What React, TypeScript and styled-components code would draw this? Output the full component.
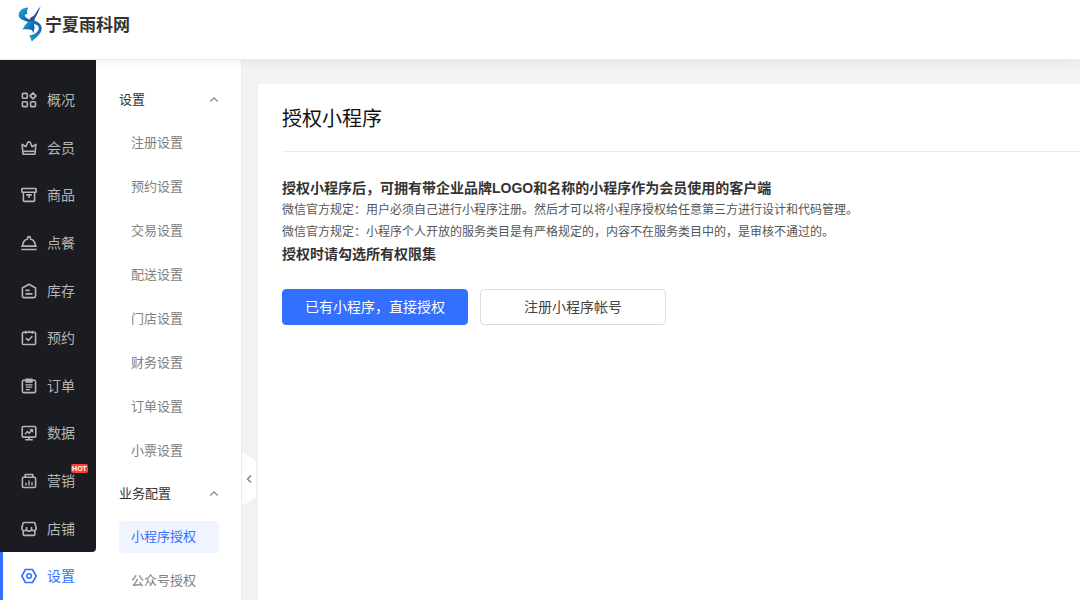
import React from 'react';
import styled, { createGlobalStyle, css } from 'styled-components';

const Global = createGlobalStyle`
  *, *::before, *::after { box-sizing: border-box; }
  body {
    margin: 0;
    background: #f2f2f5;
    color: #333;
    font-family: "Liberation Sans", "Noto Sans CJK SC", sans-serif;
    font-size: 14px;
  }
  button { font-family: inherit; }
  h1, h2, p, ul { margin: 0; padding: 0; }
  ul { list-style: none; }
  a { text-decoration: none; color: inherit; }
`;

const Page = styled.div`
  display: flex;
  flex-direction: column;
  min-height: 100vh;
`;

const Header = styled.header`
  display: flex;
  align-items: flex-start;
  height: 60px;
  padding: 4px 18px;
  background: #fff;
  border-bottom: 1px solid #ececee;
  box-shadow: 0 2px 10px rgba(0, 0, 0, 0.05);
  position: relative;
  z-index: 1;
`;

const Brand = styled.a`
  display: flex;
  align-items: center;
  gap: 2px;
  height: 38px;
  color: #333;
  font-family: "Liberation Serif", "Noto Sans CJK SC", serif;
  font-size: 17px;
  font-weight: 700;
`;

const Body = styled.div`
  display: flex;
  flex: 1;
`;

const MainNav = styled.nav`
  flex: none;
  width: 96px;
  background: #fff;
  display: flex;
`;

const NavList = styled.ul`
  flex: 1;
  display: flex;
  flex-direction: column;
`;

const NavItem = styled.li<{ $first?: boolean }>`
  flex: 1 1 0;
  min-height: 46px;
  max-height: 48px;
  display: flex;
  background: #1b1c21;
  ${(p) => p.$first && css`
    flex: none;
    min-height: 64px;
    padding-top: 16px;
  `}
  &:nth-last-child(2) { border-bottom-right-radius: 4px; }
  &:last-child { background: #fff; }
`;

const NavLink = styled.a<{ $active?: boolean }>`
  flex: 1;
  display: flex;
  align-items: center;
  gap: 10px;
  padding-left: ${(p) => (p.$active ? '18px' : '21px')};
  border-left: ${(p) => (p.$active ? '3px solid #3370ff' : 'none')};
  color: ${(p) => (p.$active ? '#3370ff' : '#b4b5b7')};
  font-size: 14px;
  line-height: 20px;
  svg { flex: none; }
`;

const NavLabel = styled.span`
  position: relative;
`;

const Hot = styled.span`
  position: absolute;
  left: 24px;
  top: -7px;
  width: 17px;
  height: 9px;
  border-radius: 2px;
  background: #f5432f;
  color: #fff;
  font-size: 7px;
  line-height: 9px;
  font-weight: 700;
  text-align: center;
`;

const SubNav = styled.nav`
  flex: none;
  width: 146px;
  padding: 16px 22px 0 23px;
  background: #fff;
  border-right: 1px solid #ececee;
`;

const GroupToggle = styled.button`
  display: flex;
  align-items: center;
  justify-content: space-between;
  width: 100%;
  height: 44px;
  padding: 0;
  border: 0;
  background: none;
  color: #333;
  font-size: 13px;
`;

const SubItem = styled.li`
  height: 44px;
  padding-top: 7px;
  &:last-child { height: 42px; }
`;

const SubLink = styled.a<{ $active?: boolean }>`
  display: block;
  height: 32px;
  padding-left: 12px;
  border-radius: 4px;
  background: ${(p) => (p.$active ? '#eff4ff' : 'transparent')};
  color: ${(p) => (p.$active ? '#3370ff' : '#808080')};
  font-size: 13px;
  line-height: 32px;
`;

const Content = styled.main`
  position: relative;
  flex: 1;
  min-width: 0;
  display: flex;
  padding: 24px 0 0 16px;
`;

const Collapse = styled.button`
  position: absolute;
  left: 0;
  top: 392px;
  width: 14px;
  height: 54px;
  padding: 0;
  border: 0;
  background: #fff;
  clip-path: polygon(0 0, 100% 17%, 100% 83%, 0 100%);
  display: flex;
  align-items: center;
  justify-content: center;
`;

const Card = styled.section`
  flex: 1;
  min-width: 0;
  padding: 0 0 24px 24px;
  background: #fff;
  border-top-left-radius: 4px;
`;

const Title = styled.h1`
  height: 68px;
  border-bottom: 1px solid #ebebed;
  color: #111;
  font-size: 20px;
  line-height: 70px;
  font-weight: 400;
`;

const Notice = styled.div`
  padding: 25px 24px 0 0;
`;

const Strong = styled.p`
  color: #333;
  font-size: 14px;
  line-height: 22px;
  font-weight: 700;
`;

const Text = styled.p`
  color: #555;
  font-size: 12px;
  line-height: 22px;
`;

const Actions = styled.div`
  display: flex;
  gap: 12px;
  padding-top: 24px;
`;

const Button = styled.button<{ $primary?: boolean }>`
  width: 186px;
  height: 36px;
  padding: 0 0 2px;
  border: 1px solid ${(p) => (p.$primary ? '#3370ff' : '#dcdcdc')};
  border-radius: 4px;
  background: ${(p) => (p.$primary ? '#3370ff' : '#fff')};
  color: ${(p) => (p.$primary ? '#fff' : '#444')};
  font-size: 14px;
`;

const Icon = ({ children }: { children: React.ReactNode }) => (
  <svg width="16" height="16" viewBox="0 0 16 16" fill="none" stroke="currentColor" strokeWidth="1.6" strokeLinejoin="round" aria-hidden="true">
    {children}
  </svg>
);

const icons = {
  overview: (
    <>
      <rect x="1.4" y="1.4" width="4.9" height="4.9" rx="0.8" />
      <path d="M12 .9 15 3.900 12 6.900 9 3.900Z" />
      <rect x="1.4" y="9.700" width="4.9" height="4.9" rx="0.8" />
      <rect x="9.600" y="9.700" width="4.9" height="4.9" rx="0.8" />
    </>
  ),
  member: (
    <>
      <path d="M1.1 4.4 4.900 6.700 6.700 2.500Q8 .9 9.300 2.500L11.100 6.700 14.900 4.400 13.900 14.200H2.100Z" />
      <path d="M2.2 11.3h11.6" />
    </>
  ),
  goods: (
    <>
      <rect x="0.9" y="1.500" width="14.2" height="3.8" rx="0.5" />
      <path d="M2.4 5.3v8.2q0 .9.9.9h9.4q.9 0 .9-.9V5.3M5.2 7.9h5.600M8 7.9v3.200" />
    </>
  ),
  dining: (
    <>
      <path d="M1.4 11.2C1.7 7.5 4 4.600 6.500 3.900V3.100A1.500 1.500 0 0 1 9.500 3.100v.8c2.500.7 4.800 3.600 5.100 7.300Z" />
      <path d="M.3 11.2h15.4M.3 14.5h15.4" />
    </>
  ),
  stock: (
    <>
      <path d="M1.4 5 8 1.3 14.6 5v8q0 1.6-1.6 1.6H3Q1.4 14.6 1.4 13Z" />
      <path d="M4.5 7.4h4.2M4.5 10.9h7" />
    </>
  ),
  booking: (
    <>
      <rect x="1.4" y="2.3" width="13.2" height="12.2" rx="0.9" />
      <path d="M4.7.8v3M11.3.8v3M8 .8v2M4.9 8l2.4 2.5 4-4.2" />
    </>
  ),
  order: (
    <>
      <rect x="1.4" y="2.2" width="13.2" height="12.4" rx="1.3" />
      <path d="M5 1.4h6v2.5H5Z" />
      <path strokeWidth="1.300" d="M4.5 6.800h7M4.900 9.200h6.200M4.900 11.600h4" />
    </>
  ),
  data: (
    <>
      <rect x="1.2" y="1.5" width="13.6" height="10.6" rx="1.2" />
      <path d="M8 12.1v2.5M4.2 14.8h7.6" />
      <path strokeWidth="1.400" d="M4 9.200 6.400 6.400l1.800 1.900 3-3.500M8.800 4.600h2.700v2.600" />
    </>
  ),
  marketing: (
    <>
      <rect x="1.4" y="4.3" width="13.2" height="10.2" rx="1.2" />
      <path d="M4.2 4.3V1.5h7.6v2.800" />
      <path strokeWidth="1.400" d="M5 9.700v2.800M8 7.500v5M11 9v3.500" />
    </>
  ),
  shop: (
    <>
      <path d="M3.3 1.500h9.4q1 0 1.300.9l1.100 4.400a2.300 2.300 0 0 1-4.600 1 2.500 2.500 0 0 1-5 0A2.300 2.300 0 0 1 .9 6.800L2 2.400q.3-.9 1.300-.9ZM5.500 5.900v1.900M10.500 5.900v1.900" />
      <path d="M2.200 9.200v4q0 1.200 1.200 1.200h9.200q1.200 0 1.200-1.200v-4" />
    </>
  ),
  settings: (
    <>
      <path d="M4.5 1.5h7L15.2 8l-3.7 6.5h-7L.8 8Z" />
      <circle cx="8" cy="8" r="2.200" />
    </>
  ),
};

const navItems: { id: keyof typeof icons; label: string; hot?: boolean }[] = [
  { id: 'overview', label: '概况' },
  { id: 'member', label: '会员' },
  { id: 'goods', label: '商品' },
  { id: 'dining', label: '点餐' },
  { id: 'stock', label: '库存' },
  { id: 'booking', label: '预约' },
  { id: 'order', label: '订单' },
  { id: 'data', label: '数据' },
  { id: 'marketing', label: '营销', hot: true },
  { id: 'shop', label: '店铺' },
  { id: 'settings', label: '设置' },
];

const groups = [
  {
    title: '设置',
    items: ['注册设置', '预约设置', '交易设置', '配送设置', '门店设置', '财务设置', '订单设置', '小票设置'],
  },
  { title: '业务配置', items: ['小程序授权', '公众号授权'] },
];

const Logo = () => (
  <svg width="25" height="38" viewBox="0 0 25 38" aria-hidden="true">
    <defs>
      <linearGradient id="ribbon" x1="0" y1="0" x2="1" y2="1">
        <stop offset="0" stopColor="#1cb4dc" />
        <stop offset="0.55" stopColor="#1272b4" />
        <stop offset="1" stopColor="#164a92" />
      </linearGradient>
      <linearGradient id="tail" x1="1" y1="0" x2="0" y2="1">
        <stop offset="0" stopColor="#1a55a0" />
        <stop offset="1" stopColor="#18a2cf" />
      </linearGradient>
    </defs>
    <path fill="url(#ribbon)" d="M10.500 3.500C5 3.300.500 7 .6 11.200.8 14.500 4.500 16 8.200 17.200L13 19 15.500 16.800C11.500 15.500 7 13.800 6.800 11.700 6.700 10.300 8 9.900 9.700 10.100 8.300 8 9 5.300 10.500 3.500Z" />
    <path fill="#2a4c96" d="M22.800 2.200C20.500 6.500 19.300 11 16.800 14.500L15.500 21 12 17.500 12.300 13.700 15.500 12C18 9.500 19.200 5.500 22.800 2.200Z" />
    <path fill="url(#ribbon)" d="M10.500 17.500 7.200 21 4.500 25.500C8.500 25 12 25 14.200 26.300L15.300 29.500 16.500 24 15.800 17.200Z" />
    <path fill="url(#tail)" d="M14.500 16C19.500 17.300 23.800 20 23.700 24.500 23.600 30.500 16.500 33.800 13.900 37.800L11.500 31.200C16.500 31 21.300 27.500 20.800 23.600 20.500 21.300 17.800 20.200 15 20Z" />
  </svg>
);

export default function App() {
  return (
    <Page>
      <Global />
      <Header>
        <Brand href="#home">
          <Logo />
          <span>宁夏雨科网</span>
        </Brand>
      </Header>
      <Body>
        <MainNav aria-label="主导航">
          <NavList>
            {navItems.map(({ id, label, hot }, i) => (
              <NavItem key={id} $first={i === 0}>
                <NavLink href={`#${id}`} $active={id === 'settings'}>
                  <Icon>{icons[id]}</Icon>
                  <NavLabel>
                    {label}
                    {hot && <Hot>HOT</Hot>}
                  </NavLabel>
                </NavLink>
              </NavItem>
            ))}
          </NavList>
        </MainNav>
        <SubNav aria-label="设置菜单">
          {groups.map((group) => (
            <section key={group.title}>
              <GroupToggle type="button" aria-expanded="true">
                {group.title}
                <svg width="10" height="10" viewBox="0 0 10 10" fill="none" stroke="#808389" strokeWidth="1.200" aria-hidden="true">
                  <path d="M1.400 8.500 5 4.900l3.600 3.600" />
                </svg>
              </GroupToggle>
              <ul>
                {group.items.map((item) => (
                  <SubItem key={item}>
                    <SubLink href="#menu" $active={item === '小程序授权'}>
                      {item}
                    </SubLink>
                  </SubItem>
                ))}
              </ul>
            </section>
          ))}
        </SubNav>
        <Content>
          <Collapse type="button" aria-label="收起菜单">
            <svg width="8" height="10" viewBox="0 0 8 10" fill="none" stroke="#7a7d84" strokeWidth="1.300" aria-hidden="true">
              <path d="M6 1.500 2.500 5 6 8.500" />
            </svg>
          </Collapse>
          <Card>
            <Title>授权小程序</Title>
            <Notice>
              <Strong>授权小程序后，可拥有带企业品牌LOGO和名称的小程序作为会员使用的客户端</Strong>
              <Text>微信官方规定：用户必须自己进行小程序注册。然后才可以将小程序授权给任意第三方进行设计和代码管理。</Text>
              <Text>微信官方规定：小程序个人开放的服务类目是有严格规定的，内容不在服务类目中的，是审核不通过的。</Text>
              <Strong>授权时请勾选所有权限集</Strong>
            </Notice>
            <Actions>
              <Button type="button" $primary>已有小程序，直接授权</Button>
              <Button type="button">注册小程序帐号</Button>
            </Actions>
          </Card>
        </Content>
      </Body>
    </Page>
  );
}
